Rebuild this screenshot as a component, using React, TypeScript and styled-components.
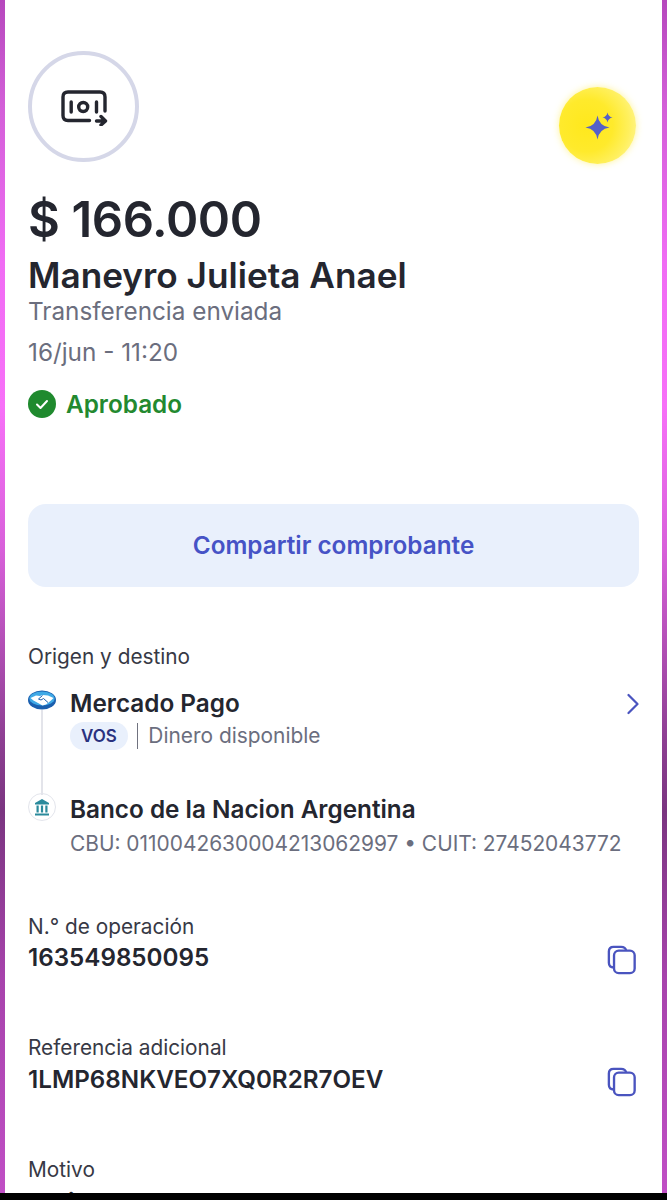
import React from 'react'
import styled, { createGlobalStyle } from 'styled-components'

const GlobalStyle = createGlobalStyle`
  html, body { margin: 0; padding: 0; background: #fff; }
  body { font-family: Inter, "Noto Sans", sans-serif; }
`

const Frame = styled.div`
  width: 667px;
  height: 1200px;
  display: flex;
  flex-direction: column;
  overflow: hidden;
  background: #000;
`

const Glow = styled.div`
  flex: 1;
  min-height: 0;
  padding: 0 5px;
  background: linear-gradient(180deg, #b648bd 0%, #d35fd8 9%, #f06cf4 22%, #f770f8 34%, #d860da 46%, #8d3f92 62%, #7a3580 68%, #a743ac 82%, #c04fc5 100%);
`

const Sheet = styled.main`
  height: 100%;
  background: #fff;
  overflow: hidden;
  padding: 51px 23px 0;
  color: #24262f;
`

const TopRow = styled.div`
  display: flex;
  justify-content: space-between;
  align-items: flex-start;
  height: 111px;
`

const IconRing = styled.div`
  width: 111px;
  height: 111px;
  box-sizing: border-box;
  border: 4px solid #d5d7e8;
  border-radius: 50%;
  display: flex;
  align-items: center;
  justify-content: center;
`

const Orb = styled.div`
  width: 77px;
  height: 77px;
  margin: 36px 3px 0 0;
  border-radius: 50%;
  display: flex;
  align-items: center;
  justify-content: center;
  background: radial-gradient(circle at 36% 50%, #ffe81c 0%, #ffea2c 42%, #fff05e 68%, #fff8b4 100%);
  box-shadow: 0 0 7px rgba(255, 233, 70, 0.55);
`

const Amount = styled.div`
  margin-top: 28px;
  font-size: 49px;
  line-height: 60px;
  font-weight: 600;
  letter-spacing: -0.4px;
`

const Name = styled.div`
  margin-top: 6px;
  font-size: 35.2px;
  line-height: 39px;
  font-weight: 600;
`

const Muted = styled.div<{ $gap: number }>`
  margin-top: ${p => p.$gap}px;
  font-size: 24.3px;
  line-height: 29px;
  color: #6b6e7e;
`

const Status = styled.div`
  margin-top: 22px;
  display: flex;
  align-items: center;
  gap: 10px;
  font-size: 24.3px;
  line-height: 30px;
  font-weight: 600;
  color: #23892f;
`

const ShareButton = styled.div`
  margin: 85px 0 0;
  height: 83px;
  padding-bottom: 2px;
  box-sizing: border-box;
  border-radius: 18px;
  background: #e9f0fc;
  display: flex;
  align-items: center;
  justify-content: center;
  font-size: 24.3px;
  font-weight: 600;
  color: #4653c6;
`

const Label = styled.div<{ $gap: number }>`
  margin-top: ${p => p.$gap}px;
  font-size: 20.8px;
  line-height: 24px;
  color: #373945;
`

const Route = styled.div`
  margin-top: 20px;
  display: flex;
  flex-direction: column;
`

const Stop = styled.div<{ $height: number }>`
  display: flex;
  gap: 14px;
  height: ${p => p.$height}px;
`

const Rail = styled.div`
  width: 28px;
  padding-top: 1px;
  display: flex;
  flex-direction: column;
  align-items: center;
  flex-shrink: 0;
`

const RailLine = styled.div`
  flex: 1;
  width: 2px;
  background: #e3e4ea;
`

const BankBadge = styled.div`
  width: 28px;
  height: 28px;
  margin-top: -3px;
  box-sizing: border-box;
  border: 1.5px solid #e3e5ec;
  border-radius: 50%;
  display: flex;
  align-items: center;
  justify-content: center;
`

const StopBody = styled.div`
  flex: 1;
  min-width: 0;
`

const StopTitle = styled.div`
  display: flex;
  justify-content: space-between;
  align-items: center;
  font-size: 24.3px;
  line-height: 29px;
  font-weight: 600;
`

const StopMeta = styled.div<{ $gap: number }>`
  margin-top: ${p => p.$gap}px;
  display: flex;
  align-items: center;
  font-size: 20.9px;
  line-height: 28px;
  color: #6b6e7e;
  white-space: nowrap;
`

const VosTag = styled.span`
  padding: 0 11px;
  height: 28px;
  border-radius: 14px;
  background: #e9f0fc;
  color: #2a327f;
  font-size: 17px;
  font-weight: 600;
  line-height: 28px;
`

const Divider = styled.span`
  width: 1.5px;
  height: 26px;
  margin: 0 10px 0 9px;
  background: #70727f;
`

const CopyRow = styled.div`
  display: flex;
  align-items: flex-end;
  justify-content: space-between;
`

const Value = styled.div<{ $gap: number }>`
  margin-top: ${p => p.$gap}px;
  font-size: 24.2px;
  line-height: 30px;
  font-weight: 600;
`

const CopyIcon = styled.svg`
  margin: 0 2px -2px 0;
`

const BottomBar = styled.div`
  height: 7px;
  background: #000;
  flex-shrink: 0;
`

const Copy = () => (
  <CopyIcon width="30" height="30" viewBox="0 0 32 32" fill="none" stroke="#4a54bf" strokeWidth="2.5">
    <path d="M7.5 24 C3.5 24 2 22.5 2 19 V7 C2 3.5 3.5 2 7 2 H15 C18.5 2 20 3.5 20.5 6" />
    <rect x="7.5" y="6" width="22" height="24" rx="5" />
  </CopyIcon>
)

export default function App() {
  return (
    <>
      <GlobalStyle />
      <Frame>
        <Glow>
          <Sheet>
            <TopRow>
              <IconRing>
                <svg width="48" height="38" viewBox="0 0 48 38" fill="none" stroke="#24262f" strokeWidth="3.4" strokeLinecap="round" strokeLinejoin="round">
                  <path d="M29.5 32.5 H8 C4.5 32.5 3 31 3 27.5 V9 C3 5.5 4.5 4 8 4 H40 C43.5 4 45 5.5 45 9 V23" />
                  <path d="M11.2 14 V24" />
                  <circle cx="23.2" cy="19" r="4.5" />
                  <path d="M36.5 14 V24" />
                  <path d="M36.5 33 H45.5 M41 28.5 L45.5 33 L41 37" />
                </svg>
              </IconRing>
              <Orb>
                <svg width="30" height="30" viewBox="-2.5 -0.5 30 30" fill="#5560c8">
                  <path d="M12 4 Q13.5 14.5 24 16 Q13.5 17.5 12 28 Q10.5 17.5 0 16 Q10.5 14.5 12 4 Z" />
                  <path d="M22 1 Q22.8 5.2 27 6 Q22.8 6.8 22 11 Q21.2 6.8 17 6 Q21.2 5.2 22 1 Z" />
                </svg>
              </Orb>
            </TopRow>

            <Amount>$ 166.000</Amount>
            <Name>Maneyro Julieta Anael</Name>
            <Muted $gap={2}>Transferencia enviada</Muted>
            <Muted $gap={12}>16/jun - 11:20</Muted>
            <Status>
              <svg width="28" height="28" viewBox="0 0 28 28">
                <circle cx="14" cy="14" r="14" fill="#1f8a2e" />
                <path d="M9 14.5 L12.5 18 L19 11" fill="none" stroke="#fff" strokeWidth="2" strokeLinecap="round" strokeLinejoin="round" />
              </svg>
              Aprobado
            </Status>

            <ShareButton>Compartir comprobante</ShareButton>

            <Label $gap={58}>Origen y destino</Label>
            <Route>
              <Stop $height={106}>
                <Rail>
                  <svg width="28" height="20" viewBox="0 0 28 20">
                    <ellipse cx="14" cy="10" rx="14" ry="9.5" fill="#1b5fae" />
                    <ellipse cx="14" cy="8.5" rx="12.6" ry="7" fill="#3fa9e6" />
                    <path d="M2.5 8 L8 5.5 L12 6 L14.5 5 L20 5.5 L25.5 8 L23 10.5 L18 14.5 L14.5 15.5 L10 13 L5.5 10.5 Z" fill="#fff" />
                    <path d="M14.5 5.5 L10.5 9 L13 10 L15.5 8.5 L20 12.5" fill="none" stroke="#1b5fae" strokeWidth="1" />
                  </svg>
                  <RailLine />
                </Rail>
                <StopBody>
                  <StopTitle>
                    Mercado Pago
                    <svg width="12" height="22" viewBox="0 0 12 22" fill="none" stroke="#4a54bf" strokeWidth="2.2" strokeLinecap="round" strokeLinejoin="round">
                      <path d="M1.5 2 L10.5 11 L1.5 20" />
                    </svg>
                  </StopTitle>
                  <StopMeta $gap={4}>
                    <VosTag>VOS</VosTag>
                    <Divider />
                    Dinero disponible
                  </StopMeta>
                </StopBody>
              </Stop>
              <Stop $height={58}>
                <Rail>
                  <BankBadge>
                    <svg width="16" height="17" viewBox="0 0 16 17" fill="#2a8a9c">
                      <path d="M8 0 L15 4 V5.5 H1 V4 Z" />
                      <rect x="2.5" y="6.5" width="2.2" height="7" />
                      <rect x="6.9" y="6.5" width="2.2" height="7" />
                      <rect x="11.3" y="6.5" width="2.2" height="7" />
                      <rect x="1" y="14.5" width="14" height="2" />
                    </svg>
                  </BankBadge>
                </Rail>
                <StopBody>
                  <StopTitle>Banco de la Nacion Argentina</StopTitle>
                  <StopMeta $gap={6}>CBU: 0110042630004213062997 • CUIT: 27452043772</StopMeta>
                </StopBody>
              </Stop>
            </Route>

            <Label $gap={62}>N.° de operación</Label>
            <CopyRow>
              <Value $gap={3.5}>163549850095</Value>
              <Copy />
            </CopyRow>

            <Label $gap={63}>Referencia adicional</Label>
            <CopyRow>
              <Value $gap={5.5}>1LMP68NKVEO7XQ0R2R7OEV</Value>
              <Copy />
            </CopyRow>

            <Label $gap={63}>Motivo</Label>
            <Value $gap={5.5}>Varios</Value>
          </Sheet>
        </Glow>
        <BottomBar />
      </Frame>
    </>
  )
}
